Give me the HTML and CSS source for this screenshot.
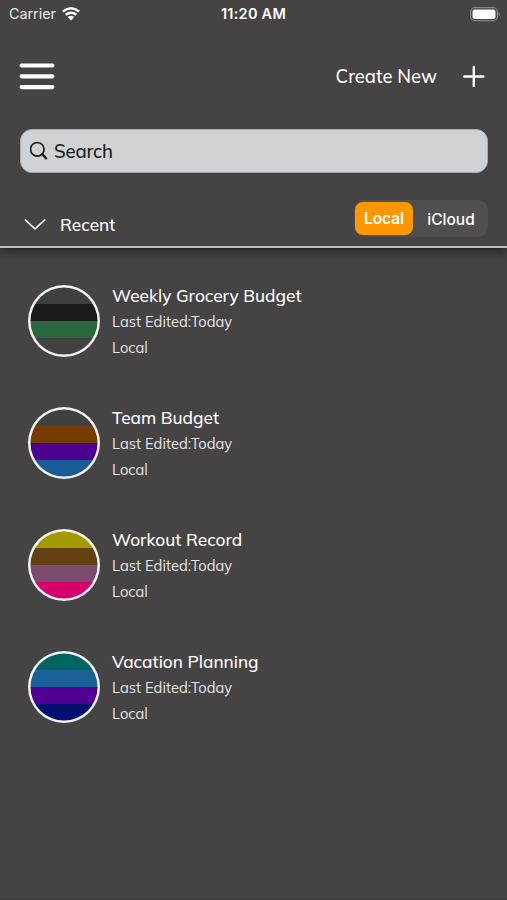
FILE: index.html
```html
<!DOCTYPE html>
<html lang="en">
<head>
<meta charset="utf-8">
<title>Recent</title>
<link rel="stylesheet" href="styles.css">
</head>
<body>
<header class="header">
  <div class="status">
    <div class="carrier"><span>Carrier</span>
      <svg width="18" height="14" viewBox="0 0 18 14" fill="none" stroke="#fff" stroke-width="2.5"><path d="M.8 4.6Q9-2 17.2 4.6M3.7 7.8Q9 3.6 14.3 7.8"/><path d="M5.7 10Q9 7.5 12.3 10L9 13.4Z" fill="#fff" stroke="none"/></svg>
    </div>
    <span class="time">11:20 AM</span>
    <svg class="battery" width="31" height="15" viewBox="0 0 31 15"><rect x=".7" y=".7" width="26.6" height="13" rx="4" fill="none" stroke="#858384" stroke-width="1.3"/><rect x="2.5" y="2.5" width="23" height="9.4" rx="2.2" fill="#fff"/><path d="M28.5 5Q31.4 7.2 28.5 9.5Z" fill="#858384"/></svg>
  </div>
  <div class="toolbar">
    <svg width="36" height="28" viewBox="0 0 36 28" stroke="#fff" stroke-width="4.2" stroke-linecap="round"><path d="M2.6 3.5H33.4M2.6 14.3H33.4M2.6 25.1H33.4"/></svg>
    <span class="create">Create New</span>
    <svg width="22" height="22" viewBox="0 0 22 22" stroke="#fff" stroke-width="2.4" stroke-linecap="round"><path d="M10.8 2V21M1.3 11.5H20.3"/></svg>
  </div>
  <div class="search">
    <svg width="20" height="20" viewBox="0 0 20 20" fill="none" stroke="#181a20" stroke-linecap="round"><circle cx="7.3" cy="8.3" r="6.8" stroke-width="1.7"/><path d="M12.5 13.2L16.2 17.4" stroke-width="2.3"/></svg>
    <span>Search</span>
  </div>
  <div class="filter">
    <svg width="22" height="12" viewBox="0 0 22 12" fill="none" stroke="#eee" stroke-width="1.6" stroke-linecap="round" stroke-linejoin="round"><path d="M1.3 1.8L11 10.8L20.8 1.8"/></svg>
    <span class="recent">Recent</span>
    <div class="segments"><span class="segment selected">Local</span><span class="segment">iCloud</span></div>
  </div>
</header>
<main class="list">
  <article class="item">
    <div class="badge grocery"></div>
    <div class="info"><h2>Weekly Grocery Budget</h2><p>Last Edited:Today</p><p>Local</p></div>
  </article>
  <article class="item">
    <div class="badge team"></div>
    <div class="info"><h2>Team Budget</h2><p>Last Edited:Today</p><p>Local</p></div>
  </article>
  <article class="item">
    <div class="badge workout"></div>
    <div class="info"><h2>Workout Record</h2><p>Last Edited:Today</p><p>Local</p></div>
  </article>
  <article class="item">
    <div class="badge vacation"></div>
    <div class="info"><h2>Vacation Planning</h2><p>Last Edited:Today</p><p>Local</p></div>
  </article>
</main>
</body>
</html>
```
FILE: styles.css
```css
* { box-sizing: border-box; margin: 0; }
body { height: 900px; overflow: hidden; background: #454344; color: #fff; font-family: Mulish, Muli, Lato, sans-serif; border-bottom: 1px solid #3c3a3b; }
svg { display: block; flex: none; }
span, h2, p { white-space: nowrap; }
.header { height: 248px; border-bottom: 2px solid #bcbcbc; box-shadow: 0 2px 10px #1a1a1a; }
.status { display: grid; grid-template-columns: 1fr auto 1fr; align-items: center; height: 28px; padding: 0 6px 0 9px; font: 500 14.3px/28px Inter, sans-serif; }
.carrier { display: flex; align-items: center; gap: 6px; color: #e8e8e8; font-weight: 400; }
.time { font-weight: 600; font-size: 14.5px; letter-spacing: .25px; padding-right: 3px; }
.battery { justify-self: end; }
.toolbar { display: flex; align-items: center; height: 96px; padding: 0 22px 0 19px; }
.create { margin-left: auto; margin-right: 26px; font-size: 18.4px; font-weight: 500; }
.search { display: flex; align-items: center; gap: 4px; height: 44px; margin: 5px 19px 0 20px; padding-left: 9px; border-radius: 12px; background: #d0d2d5; border: 1px solid #aaacae; color: #181a20; font-size: 18.6px; font-weight: 500; letter-spacing: -.2px; }
.filter { display: flex; align-items: center; height: 73px; padding: 4px 19px 0 24px; }
.recent { margin: 2px auto 0 14px; font-size: 17.3px; font-weight: 500; }
.filter > svg, .recent { transform: translateY(12px); }
.segments { display: flex; align-items: center; width: 134px; height: 37px; margin-top: 14px; padding: 2px 1px; border-radius: 10px; background: #504e50; font: 500 15.5px Inter, sans-serif; }
.segment { flex: 1; padding: 1px 0 0 2px; text-align: center; }
.selected { flex: none; width: 58px; height: 33px; padding: 0; line-height: 34px; background: #ff9700; border-radius: 8px; font-weight: 600; letter-spacing: -.1px; }
.list { padding: 37px 28px 0; }
.item { display: flex; gap: 12px; height: 122.1px; }
.badge { width: 72px; height: 72px; padding: 2.5px; border-radius: 50%; box-shadow: inset 0 0 0 2.5px #f3f3f3; background-origin: content-box; background-repeat: no-repeat; background-image: linear-gradient(var(--a) 24.4%, var(--b) 24.4% 49.4%, var(--c) 49.4% 75%, var(--d) 75%); }
.grocery { --a: #3d3f40; --b: #1a1a1a; --c: #2c663e; --d: #414142; }
.team { --a: #3d4142; --b: #743b02; --c: #4c008d; --d: #185d96; }
.workout { --a: #a39a00; --b: #643f11; --c: #7c4b70; --d: #d6006c; }
.vacation { --a: #006461; --b: #1b6097; --c: #500092; --d: #00106f; }
.info h2 { height: 24px; font-size: 17.25px; font-weight: 500; line-height: 22px; }
.info p { height: 26px; color: #e4e4e4; font-size: 14.7px; line-height: 26px; }
```
